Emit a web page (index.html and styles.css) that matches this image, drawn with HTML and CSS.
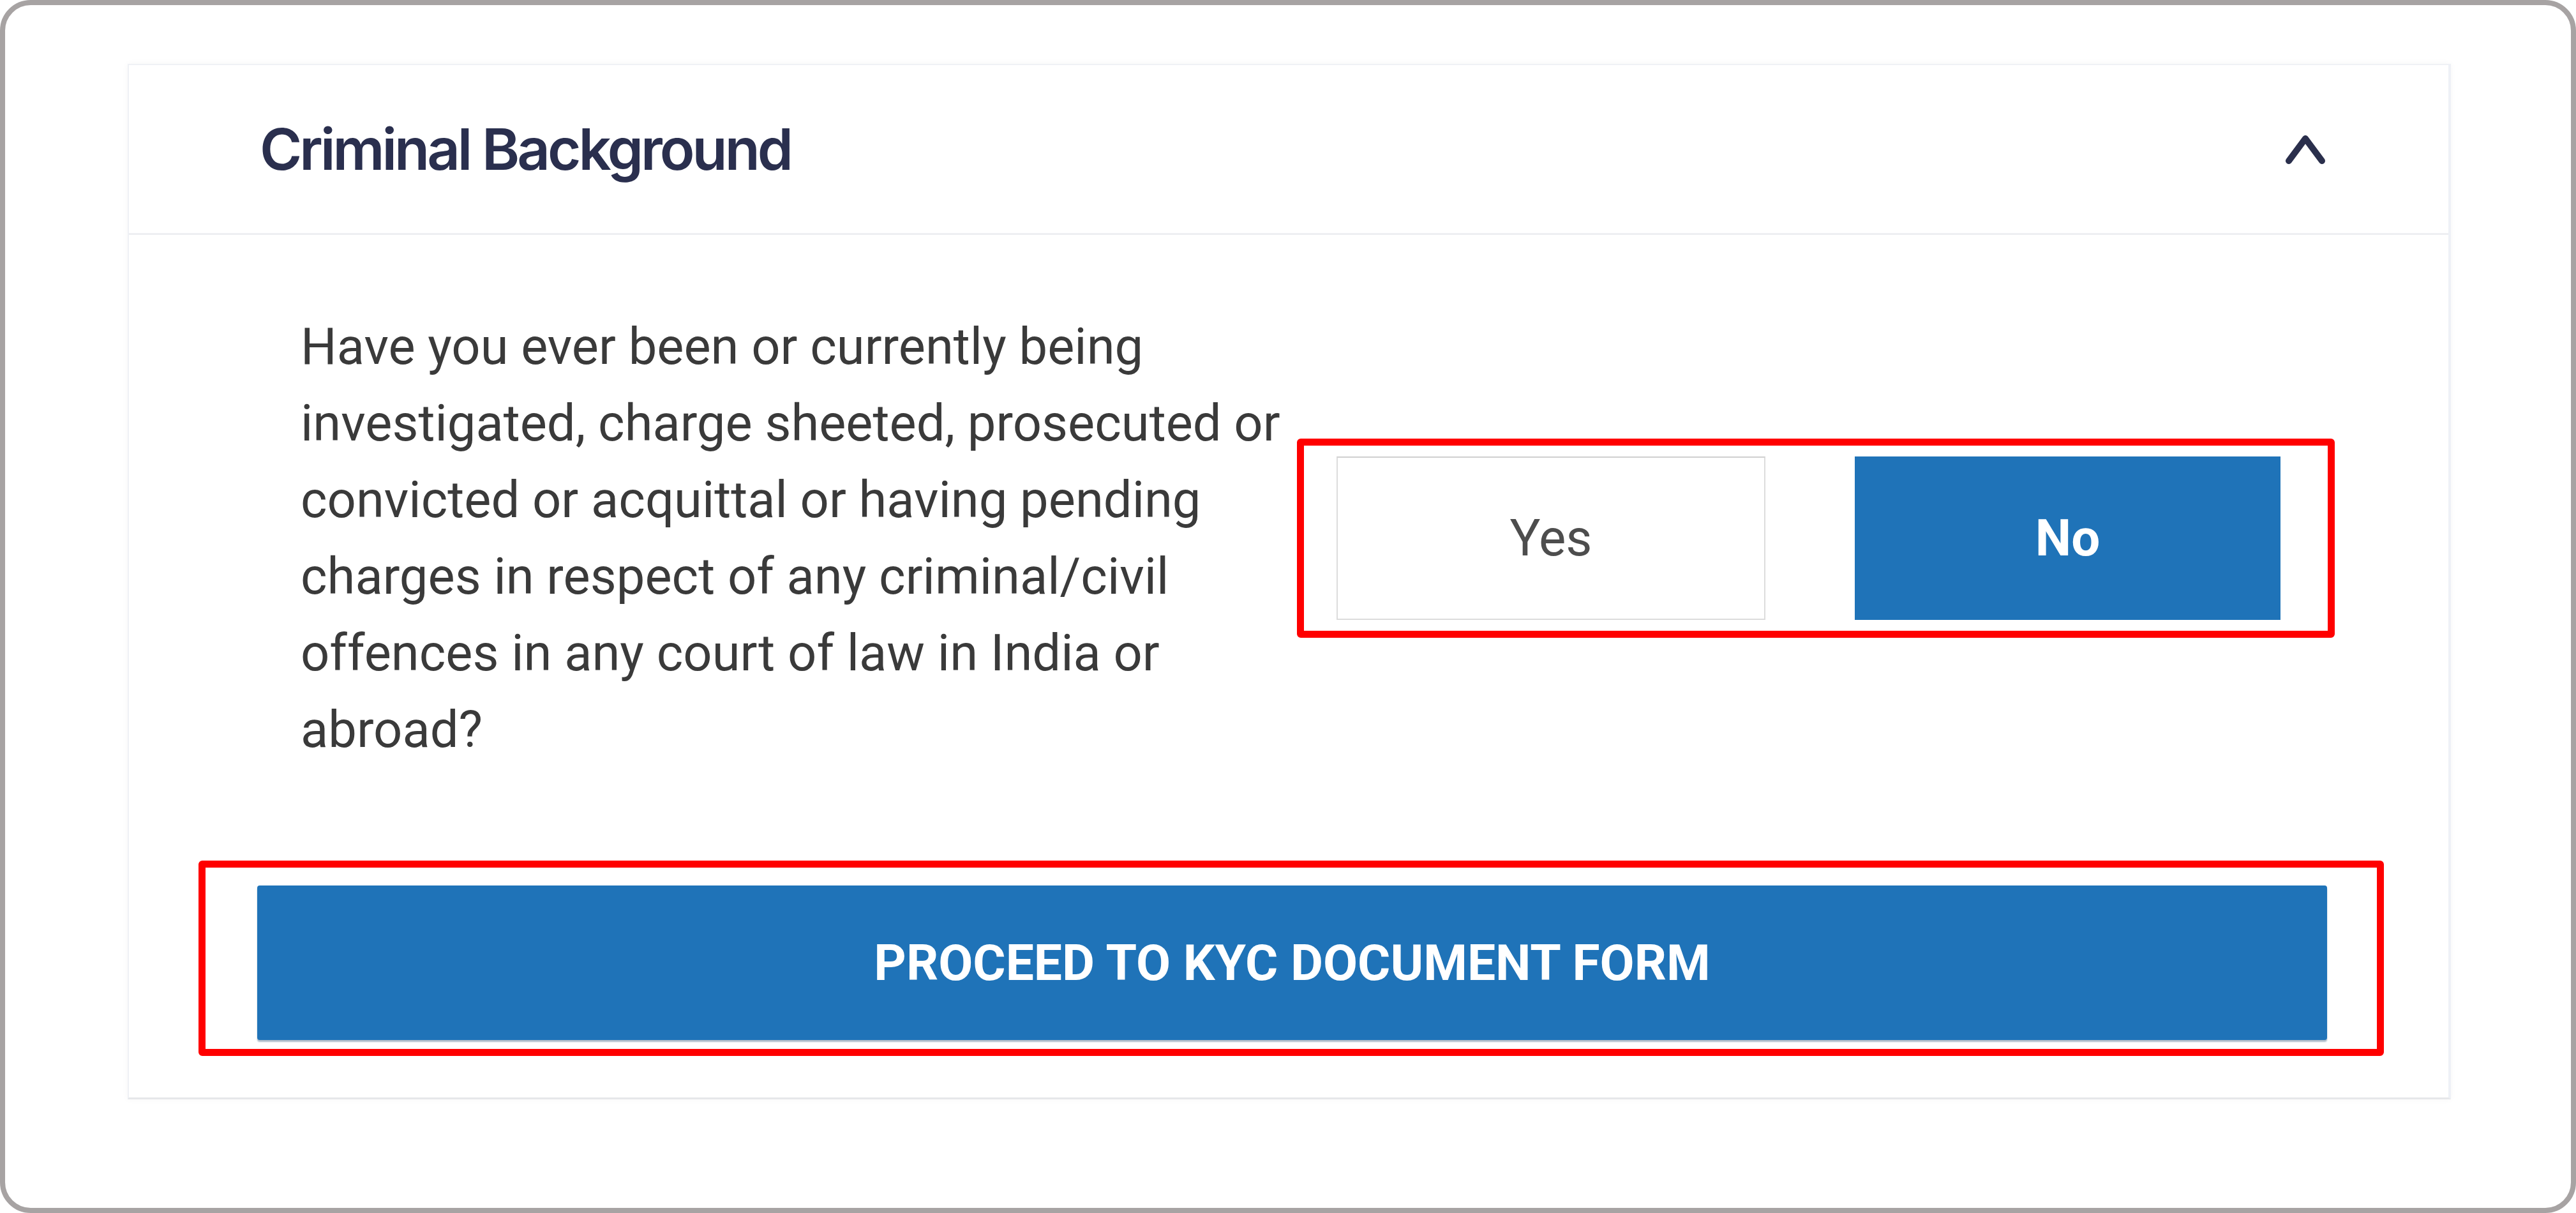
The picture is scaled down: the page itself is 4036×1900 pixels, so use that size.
FILE: index.html
```html
<!DOCTYPE html>
<html lang="en">
<head>
<meta charset="utf-8">
<title>Criminal Background</title>
<link rel="stylesheet" href="styles.css">
</head>
<body>
<div class="frame">
  <section class="card">
    <header class="card-head">
      <h2 class="title">Criminal Background</h2>
      <svg class="chev" width="66" height="48" viewBox="0 0 66 48" aria-hidden="true">
        <polyline points="7,42 33,7 59,42" fill="none" stroke="#2a2f4c" stroke-width="10" stroke-linecap="round" stroke-linejoin="round"/>
      </svg>
    </header>
    <div class="card-body">
      <div class="q-row">
        <p class="question">Have you ever been or currently being investigated, charge sheeted, prosecuted or convicted or acquittal or having pending charges in respect of any criminal/civil offences in any court of law in India or abroad?</p>
        <div class="mark mark-options">
          <button class="opt opt-yes" type="button">Yes</button>
          <button class="opt opt-no" type="button">No</button>
        </div>
      </div>
      <div class="mark mark-proceed">
        <button class="proceed" type="button">PROCEED TO KYC DOCUMENT FORM</button>
      </div>
    </div>
  </section>
</div>
</body>
</html>
```
FILE: styles.css
```css
html, body {
  margin: 0;
  padding: 0;
  background: #ffffff;
}

.frame {
  box-sizing: border-box;
  width: 4036px;
  height: 1900px;
  border: 8px solid #a7a3a3;
  border-radius: 48px;
  padding: 92px 188px 0 192px;
  background: #ffffff;
}

.card {
  background: #ffffff;
  border: 2px solid #eff1f5;
  border-right: 4px solid #eef1f6;
  border-bottom: 3px solid #e6e7ea;
  box-shadow: 0 0 10px rgba(0, 0, 0, 0.04);
}

.card-head {
  box-sizing: border-box;
  height: 266px;
  display: flex;
  align-items: center;
  justify-content: space-between;
  padding: 0 191px 0 205px;
  border-bottom: 3px solid #eeeff2;
}

.title {
  margin: 0;
  font-family: Inter, "Noto Sans", sans-serif;
  font-weight: 600;
  font-size: 90px;
  letter-spacing: -4px;
  color: #2a2f4e;
}

.chev {
  display: block;
  flex: none;
}

.card-body {
  padding: 115px 101px 65px 109px;
}

.q-row {
  display: flex;
  align-items: center;
  margin-left: 160px;
}

.question {
  margin: 0;
  flex: 0 0 1552px;
  font-family: Roboto, "Liberation Sans", sans-serif;
  font-weight: 400;
  font-size: 79.5px;
  line-height: 120px;
  color: #3a3a3a;
}

.mark {
  border: 11px solid #ff0000;
  border-radius: 6px;
}

.mark-options {
  margin-left: 9px;
  display: flex;
  gap: 140px;
  padding: 17px 74px 17px 51px;
}

.opt {
  box-sizing: border-box;
  height: 256px;
  margin: 0;
  font-family: Roboto, "Liberation Sans", sans-serif;
  font-size: 80px;
  cursor: pointer;
}

.opt-yes {
  width: 672px;
  background: #ffffff;
  border: 2px solid #dcdcdc;
  border-top-color: #cfcfcf;
  color: #4d4d4d;
  font-weight: 400;
}

.opt-no {
  width: 667px;
  background: #1f73b8;
  border: 0;
  color: #ffffff;
  font-weight: 700;
}

.mark-proceed {
  margin-top: 145px;
  padding: 28px 78px 14px 81px;
}

.proceed {
  display: block;
  width: 100%;
  height: 242px;
  margin: 0;
  background: #1f73b8;
  border: 0;
  border-radius: 4px;
  box-shadow: 0 3px 2px rgba(20, 60, 100, 0.35);
  color: #ffffff;
  font-family: Roboto, "Liberation Sans", sans-serif;
  font-weight: 700;
  font-size: 78.5px;
  cursor: pointer;
}
```
